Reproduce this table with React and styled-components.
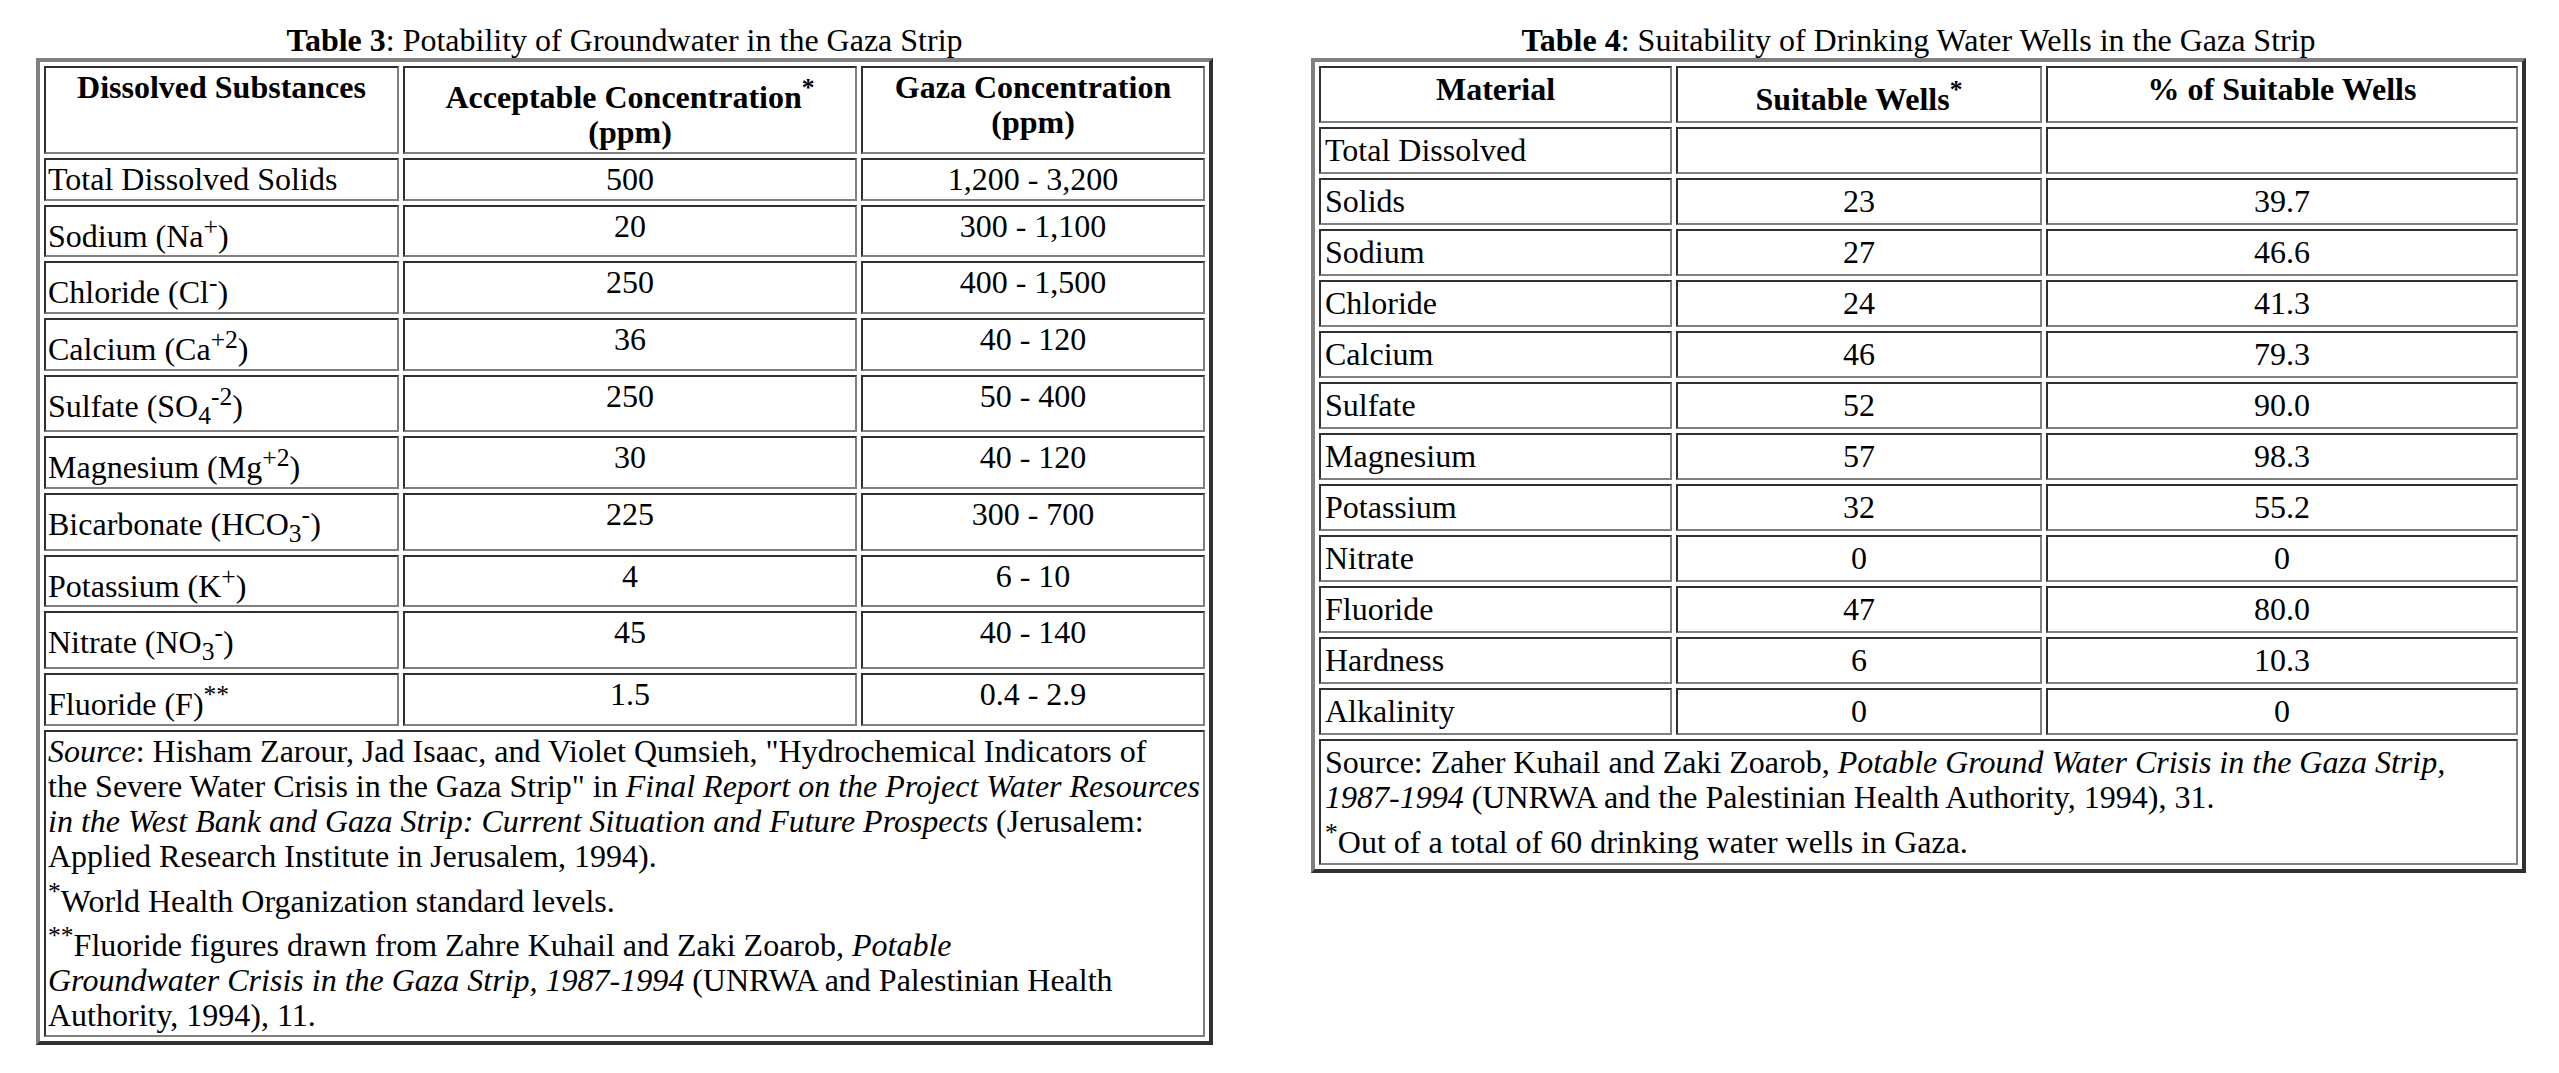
import React from 'react';
import styled, { createGlobalStyle } from 'styled-components';

const GlobalStyle = createGlobalStyle`
  html, body { margin: 0; padding: 0; background: #ffffff; }
  body {
    font-family: "Liberation Serif", "Times New Roman", Times, serif;
    font-size: 32px;
    color: #000000;
  }
`;

const Page = styled.div`
  display: flex;
  align-items: flex-start;
  gap: 98px;
  padding: 23px 0 0 36px;
`;

const DataTable = styled.table`
  width: ${(p) => p.$width}px;
  table-layout: fixed;
  border-collapse: separate;
  border-spacing: 4px;
  border-style: solid;
  border-width: 4px;
  border-color: #808080 #303030 #303030 #808080;
  line-height: 35px;
`;

const Caption = styled.caption`
  text-align: center;
  white-space: nowrap;
  line-height: 35px;
  font-family: "Liberation Serif", "Times New Roman", serif;
`;

const Strong = styled.b`
  font-weight: bold;
`;

const Col = styled.col`
  width: ${(p) => p.$w}px;
`;

const HeadCell = styled.th`
  border-style: solid;
  border-width: 2px;
  border-color: #303030 #808080 #808080 #303030;
  padding: ${(p) => p.$pad}px;
  vertical-align: top;
  text-align: center;
  font-weight: bold;
`;

const Cell = styled.td`
  border-style: solid;
  border-width: 2px;
  border-color: #303030 #808080 #808080 #303030;
  padding: ${(p) => p.$pad}px;
  vertical-align: top;
  text-align: ${(p) => (p.$center ? 'center' : 'left')};
  white-space: nowrap;
`;

const NoteCell = styled(Cell)`
  white-space: nowrap;
`;

const Sup = styled.sup`
  font-size: 0.8em;
  vertical-align: super;
`;

const Sub = styled.sub`
  font-size: 0.8em;
  line-height: 27px;
  vertical-align: -7px;
`;

const Em = styled.i`
  font-style: italic;
`;

const table3Rows = [
  { label: <>Total Dissolved Solids</>, a: '500', g: '1,200 - 3,200' },
  { label: <>Sodium (Na<Sup>+</Sup>)</>, a: '20', g: '300 - 1,100' },
  { label: <>Chloride (Cl<Sup>-</Sup>)</>, a: '250', g: '400 - 1,500' },
  { label: <>Calcium (Ca<Sup>+2</Sup>)</>, a: '36', g: '40 - 120' },
  { label: <>Sulfate (SO<Sub>4</Sub><Sup>-2</Sup>)</>, a: '250', g: '50 - 400' },
  { label: <>Magnesium (Mg<Sup>+2</Sup>)</>, a: '30', g: '40 - 120' },
  { label: <>Bicarbonate (HCO<Sub>3</Sub><Sup>-</Sup>)</>, a: '225', g: '300 - 700' },
  { label: <>Potassium (K<Sup>+</Sup>)</>, a: '4', g: '6 - 10' },
  { label: <>Nitrate (NO<Sub>3</Sub><Sup>-</Sup>)</>, a: '45', g: '40 - 140' },
  { label: <>Fluoride (F)<Sup>**</Sup></>, a: '1.5', g: '0.4 - 2.9' },
];

const table4Rows = [
  ['Total Dissolved', '', ''],
  ['Solids', '23', '39.7'],
  ['Sodium', '27', '46.6'],
  ['Chloride', '24', '41.3'],
  ['Calcium', '46', '79.3'],
  ['Sulfate', '52', '90.0'],
  ['Magnesium', '57', '98.3'],
  ['Potassium', '32', '55.2'],
  ['Nitrate', '0', '0'],
  ['Fluoride', '47', '80.0'],
  ['Hardness', '6', '10.3'],
  ['Alkalinity', '0', '0'],
];

function Table3() {
  const pad = 2;
  return (
    <DataTable $width={1177}>
      <Caption>
        <Strong>Table 3</Strong>: Potability of Groundwater in the Gaza Strip
      </Caption>
      <colgroup>
        <Col $w={355} />
        <Col $w={454} />
        <Col $w={344} />
      </colgroup>
      <tbody>
        <tr>
          <HeadCell $pad={pad}>Dissolved Substances</HeadCell>
          <HeadCell $pad={pad}>
            Acceptable Concentration<Sup>*</Sup>
            <br />
            (ppm)
          </HeadCell>
          <HeadCell $pad={pad}>
            Gaza Concentration
            <br />
            (ppm)
          </HeadCell>
        </tr>
        {table3Rows.map((r, i) => (
          <tr key={i}>
            <Cell $pad={pad}>{r.label}</Cell>
            <Cell $pad={pad} $center>{r.a}</Cell>
            <Cell $pad={pad} $center>{r.g}</Cell>
          </tr>
        ))}
        <tr>
          <NoteCell $pad={pad} colSpan={3}>
            <Em>Source</Em>: Hisham Zarour, Jad Isaac, and Violet Qumsieh, "Hydrochemical Indicators of
            <br />
            the Severe Water Crisis in the Gaza Strip" in <Em>Final Report on the Project Water Resources</Em>
            <br />
            <Em>in the West Bank and Gaza Strip: Current Situation and Future Prospects</Em> (Jerusalem:
            <br />
            Applied Research Institute in Jerusalem, 1994).
            <br />
            <Sup>*</Sup>World Health Organization standard levels.
            <br />
            <Sup>**</Sup>Fluoride figures drawn from Zahre Kuhail and Zaki Zoarob, <Em>Potable</Em>
            <br />
            <Em>Groundwater Crisis in the Gaza Strip, 1987-1994</Em> (UNRWA and Palestinian Health
            <br />
            Authority, 1994), 11.
          </NoteCell>
        </tr>
      </tbody>
    </DataTable>
  );
}

function Table4() {
  const pad = 4;
  return (
    <DataTable $width={1215}>
      <Caption>
        <Strong>Table 4</Strong>: Suitability of Drinking Water Wells in the Gaza Strip
      </Caption>
      <colgroup>
        <Col $w={353} />
        <Col $w={366} />
        <Col $w={472} />
      </colgroup>
      <tbody>
        <tr>
          <HeadCell $pad={pad}>Material</HeadCell>
          <HeadCell $pad={pad}>
            Suitable Wells<Sup>*</Sup>
          </HeadCell>
          <HeadCell $pad={pad}>% of Suitable Wells</HeadCell>
        </tr>
        {table4Rows.map((r, i) => (
          <tr key={i}>
            <Cell $pad={pad}>{r[0]}</Cell>
            <Cell $pad={pad} $center>{r[1]}</Cell>
            <Cell $pad={pad} $center>{r[2]}</Cell>
          </tr>
        ))}
        <tr>
          <NoteCell $pad={pad} colSpan={3}>
            Source: Zaher Kuhail and Zaki Zoarob, <Em>Potable Ground Water Crisis in the Gaza Strip,</Em>
            <br />
            <Em>1987-1994</Em> (UNRWA and the Palestinian Health Authority, 1994), 31.
            <br />
            <Sup>*</Sup>Out of a total of 60 drinking water wells in Gaza.
          </NoteCell>
        </tr>
      </tbody>
    </DataTable>
  );
}

export default function App() {
  return (
    <>
      <GlobalStyle />
      <Page>
        <Table3 />
        <Table4 />
      </Page>
    </>
  );
}
